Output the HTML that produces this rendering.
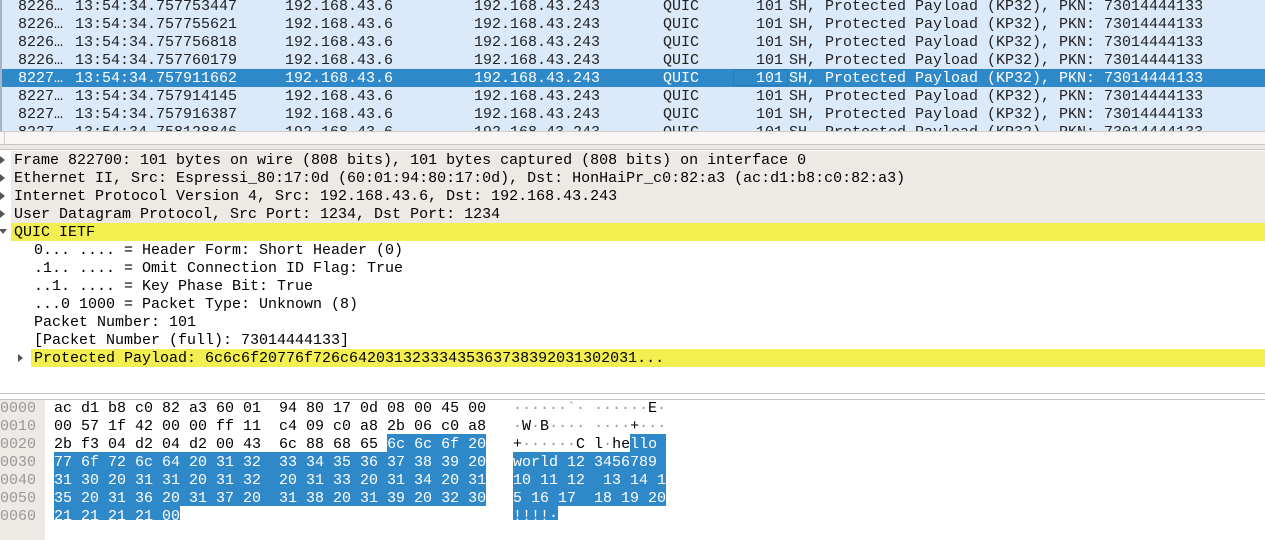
<!DOCTYPE html>
<html><head><meta charset="utf-8"><style>
*{margin:0;padding:0;box-sizing:border-box}
body{width:1265px;height:540px;overflow:hidden;background:#fff;font-family:"Liberation Mono",monospace;font-size:15px;position:relative}
.a{position:absolute;white-space:pre;line-height:18px;height:18px}
#list{position:absolute;left:0;top:0;width:1265px;height:131px;background:#dbeafb;border-left:2px solid #a8b4c0;overflow:hidden}
.r{position:absolute;left:0;width:1265px;height:18px;color:#222}
.r span{position:absolute;top:1px;line-height:18px;white-space:pre}
.sel{background:#2f88c8;color:#fff}
.tri{position:absolute;width:0;height:0;border-top:4px solid transparent;border-bottom:4px solid transparent;border-left:5px solid #555}
.trd{position:absolute;width:0;height:0;border-left:4px solid transparent;border-right:4px solid transparent;border-top:5px solid #555}
.hl{background:#2f88c8;color:#fff}
.d{top:1px}
</style></head><body>
<div id="list">
<div class="r" style="top:-3px"><span style="left:16px">8226…</span><span style="left:73px">13:54:34.757753447</span><span style="left:283px">192.168.43.6</span><span style="left:472px">192.168.43.243</span><span style="left:661px">QUIC</span><span style="left:754px">101</span><span style="left:787px">SH, Protected Payload (KP32), PKN: 73014444133</span></div>
<div class="r" style="top:15px"><span style="left:16px">8226…</span><span style="left:73px">13:54:34.757755621</span><span style="left:283px">192.168.43.6</span><span style="left:472px">192.168.43.243</span><span style="left:661px">QUIC</span><span style="left:754px">101</span><span style="left:787px">SH, Protected Payload (KP32), PKN: 73014444133</span></div>
<div class="r" style="top:33px"><span style="left:16px">8226…</span><span style="left:73px">13:54:34.757756818</span><span style="left:283px">192.168.43.6</span><span style="left:472px">192.168.43.243</span><span style="left:661px">QUIC</span><span style="left:754px">101</span><span style="left:787px">SH, Protected Payload (KP32), PKN: 73014444133</span></div>
<div class="r" style="top:51px"><span style="left:16px">8226…</span><span style="left:73px">13:54:34.757760179</span><span style="left:283px">192.168.43.6</span><span style="left:472px">192.168.43.243</span><span style="left:661px">QUIC</span><span style="left:754px">101</span><span style="left:787px">SH, Protected Payload (KP32), PKN: 73014444133</span></div>
<div class="r sel" style="top:69px"><span style="left:731px;width:55px;height:17px;border:1px solid #2a79b2;top:0"></span><span style="left:16px">8227…</span><span style="left:73px">13:54:34.757911662</span><span style="left:283px">192.168.43.6</span><span style="left:472px">192.168.43.243</span><span style="left:661px">QUIC</span><span style="left:754px">101</span><span style="left:787px">SH, Protected Payload (KP32), PKN: 73014444133</span></div>
<div class="r" style="top:87px"><span style="left:16px">8227…</span><span style="left:73px">13:54:34.757914145</span><span style="left:283px">192.168.43.6</span><span style="left:472px">192.168.43.243</span><span style="left:661px">QUIC</span><span style="left:754px">101</span><span style="left:787px">SH, Protected Payload (KP32), PKN: 73014444133</span></div>
<div class="r" style="top:105px"><span style="left:16px">8227…</span><span style="left:73px">13:54:34.757916387</span><span style="left:283px">192.168.43.6</span><span style="left:472px">192.168.43.243</span><span style="left:661px">QUIC</span><span style="left:754px">101</span><span style="left:787px">SH, Protected Payload (KP32), PKN: 73014444133</span></div>
<div class="r" style="top:123px"><span style="left:16px">8227…</span><span style="left:73px">13:54:34.758128846</span><span style="left:283px">192.168.43.6</span><span style="left:472px">192.168.43.243</span><span style="left:661px">QUIC</span><span style="left:754px">101</span><span style="left:787px">SH, Protected Payload (KP32), PKN: 73014444133</span></div>
</div>
<div style="position:absolute;left:0;top:131px;width:1265px;height:14px;background:#f7f6f5;border-top:1px solid #cfcbc7;border-bottom:1px solid #c8c4c0"></div>
<div style="position:absolute;left:4px;top:132px;width:1px;height:12px;background:#cfcbc7"></div>
<div style="position:absolute;left:0;top:145px;width:1265px;height:5px;background:#ede9e5;border-bottom:1px solid #c8c4c0"></div>
<div style="position:absolute;left:11px;top:151px;width:1254px;height:72px;background:#ede9e5"></div>
<div style="position:absolute;left:11px;top:223px;width:1254px;height:18px;background:#f4ef50"></div>
<div style="position:absolute;left:31px;top:349px;width:1234px;height:18px;background:#f4ef50"></div>
<div class="tri" style="left:0;top:156px"></div>
<div class="tri" style="left:0;top:174px"></div>
<div class="tri" style="left:0;top:192px"></div>
<div class="tri" style="left:0;top:210px"></div>
<div class="trd" style="left:-1px;top:229px"></div>
<div class="tri" style="left:18px;top:354px"></div>
<div class="a" style="left:14px;top:152px">Frame 822700: 101 bytes on wire (808 bits), 101 bytes captured (808 bits) on interface 0</div>
<div class="a" style="left:14px;top:170px">Ethernet II, Src: Espressi_80:17:0d (60:01:94:80:17:0d), Dst: HonHaiPr_c0:82:a3 (ac:d1:b8:c0:82:a3)</div>
<div class="a" style="left:14px;top:188px">Internet Protocol Version 4, Src: 192.168.43.6, Dst: 192.168.43.243</div>
<div class="a" style="left:14px;top:206px">User Datagram Protocol, Src Port: 1234, Dst Port: 1234</div>
<div class="a" style="left:14px;top:224px">QUIC IETF</div>
<div class="a" style="left:34px;top:242px">0... .... = Header Form: Short Header (0)</div>
<div class="a" style="left:34px;top:260px">.1.. .... = Omit Connection ID Flag: True</div>
<div class="a" style="left:34px;top:278px">..1. .... = Key Phase Bit: True</div>
<div class="a" style="left:34px;top:296px">...0 1000 = Packet Type: Unknown (8)</div>
<div class="a" style="left:34px;top:314px">Packet Number: 101</div>
<div class="a" style="left:34px;top:332px">[Packet Number (full): 73014444133]</div>
<div class="a" style="left:34px;top:350px">Protected Payload: 6c6c6f20776f726c64203132333435363738392031302031...</div>
<div style="position:absolute;left:0;top:393px;width:1265px;height:7px;background:#fff;border-top:1px solid #c8c4c0;border-bottom:1px solid #c8c4c0"></div>
<div style="position:absolute;left:0;top:400px;width:45px;height:140px;background:#ede9e5"></div>
<div class="hl" style="position:absolute;left:387px;top:434px;width:99px;height:18px"></div>
<div class="hl" style="position:absolute;left:54px;top:452px;width:432px;height:54px"></div>
<div class="hl" style="position:absolute;left:54px;top:506px;width:126px;height:14px"></div>
<div class="hl" style="position:absolute;left:630px;top:434px;width:36px;height:18px"></div>
<div class="hl" style="position:absolute;left:513px;top:452px;width:153px;height:54px"></div>
<div class="hl" style="position:absolute;left:513px;top:506px;width:45px;height:14px"></div>
<div class="a" style="left:0;top:400px;height:auto;color:#999">0000
0010
0020
0030
0040
0050
0060</div>
<div class="a" style="left:54px;top:400px;height:auto">ac d1 b8 c0 82 a3 60 01  94 80 17 0d 08 00 45 00
00 57 1f 42 00 00 ff 11  c4 09 c0 a8 2b 06 c0 a8
2b f3 04 d2 04 d2 00 43  6c 88 68 65 <span style="color:#fff">6c 6c 6f 20</span>
<span style="color:#fff">77 6f 72 6c 64 20 31 32  33 34 35 36 37 38 39 20
31 30 20 31 31 20 31 32  20 31 33 20 31 34 20 31
35 20 31 36 20 31 37 20  31 38 20 31 39 20 32 30
21 21 21 21 00</span></div>
<div class="a" style="left:513px;top:400px;height:auto"><span style="color:#999">······`· ······</span>E<span style="color:#999">·</span>
<span style="color:#999">·</span>W<span style="color:#999">·</span>B<span style="color:#999">···· ····</span>+<span style="color:#999">···</span>
+<span style="color:#999">······</span>C l<span style="color:#999">·</span>he<span style="color:#fff">llo</span>
<span style="color:#fff">world 12 3456789
10 11 12  13 14 1
5 16 17  18 19 20
!!!!·</span></div>
</body></html>
